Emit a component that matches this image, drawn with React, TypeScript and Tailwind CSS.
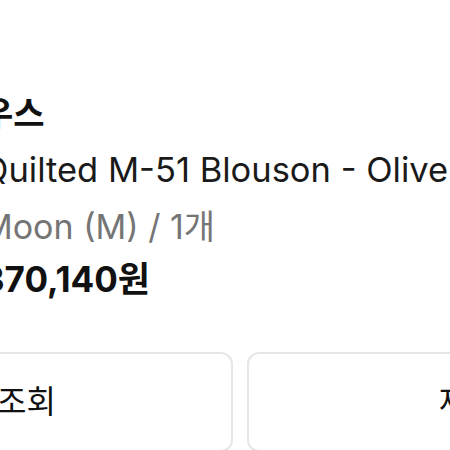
import React from "react";

const font = { fontFamily: 'Inter, "Noto Sans CJK KR", sans-serif' };

export default function App() {
  return (
    <div
      className="w-[450px] h-[450px] bg-white overflow-hidden text-[#111111]"
      style={font}
    >
      <div className="flex flex-col pt-[88px]">
        <div className="ml-[-18px] flex flex-col">
          <div className="text-[34px] leading-[52px] font-bold whitespace-nowrap">우스</div>
          <div className="text-[34.5px] leading-[60px] whitespace-nowrap text-[#1a1a1a]">
            Quilted M-51 Blouson - Olive
          </div>
          <div className="text-[34px] leading-[53px] whitespace-nowrap text-[#757575]">
            Moon (M) / 1개
          </div>
          <div className="text-[35px] leading-[52px] font-bold whitespace-nowrap">370,140원</div>
        </div>
        <div className="mt-[47px] ml-[-239px] flex gap-[14px]">
          <div className="w-[472px] h-[100px] shrink-0 rounded-[12px] border-[2px] border-[#e6e6e6] flex items-center justify-center text-[32px] whitespace-nowrap">
            배송조회
          </div>
          <div className="w-[472px] h-[100px] shrink-0 rounded-[12px] border-[2px] border-[#e6e6e6] flex items-center justify-center text-[32px] whitespace-nowrap">
            재구매
          </div>
        </div>
      </div>
    </div>
  );
}
